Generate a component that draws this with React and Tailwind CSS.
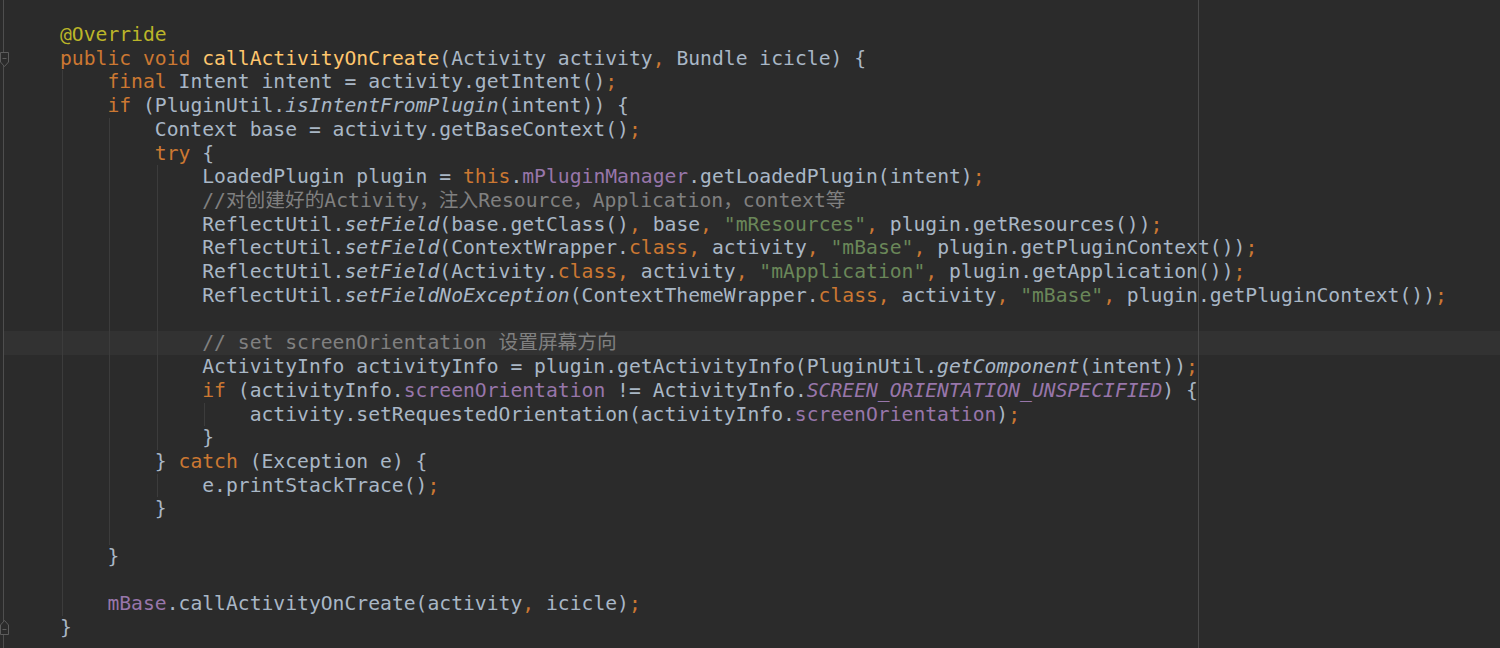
import React from 'react';

// token colours, Darcula-ish
const tone = {
    t: 'text-[#a9b7c6]',
    k: 'text-[#cc7832]',
    a: 'text-[#bbb529]',
    f: 'text-[#ffc66d]',
    s: 'text-[#6a8759]',
    p: 'text-[#9876aa]',
    i: 'text-[#a9b7c6] italic',
    pi: 'text-[#9876aa] italic',
    c: 'text-[#808080]',
};

const lines = [
    { ind: 4, t: [['a', '@Override']] },
    { ind: 4, t: [['k', 'public void '], ['f', 'callActivityOnCreate'], ['t', '(Activity activity'], ['k', ', '], ['t', 'Bundle icicle) {']] },
    { ind: 8, t: [['k', 'final '], ['t', 'Intent intent = activity.getIntent()'], ['k', ';']] },
    { ind: 8, t: [['k', 'if '], ['t', '(PluginUtil.'], ['i', 'isIntentFromPlugin'], ['t', '(intent)) {']] },
    { ind: 12, t: [['t', 'Context base = activity.getBaseContext()'], ['k', ';']] },
    { ind: 12, t: [['k', 'try '], ['t', '{']] },
    { ind: 16, t: [['t', 'LoadedPlugin plugin = '], ['k', 'this'], ['t', '.'], ['p', 'mPluginManager'], ['t', '.getLoadedPlugin(intent)'], ['k', ';']] },
    { ind: 16, t: [['c', '//对创建好的Activity，注入Resource，Application，context等']] },
    { ind: 16, t: [['t', 'ReflectUtil.'], ['i', 'setField'], ['t', '(base.getClass()'], ['k', ', '], ['t', 'base'], ['k', ', '], ['s', '"mResources"'], ['k', ', '], ['t', 'plugin.getResources())'], ['k', ';']] },
    { ind: 16, t: [['t', 'ReflectUtil.'], ['i', 'setField'], ['t', '(ContextWrapper.'], ['k', 'class, '], ['t', 'activity'], ['k', ', '], ['s', '"mBase"'], ['k', ', '], ['t', 'plugin.getPluginContext())'], ['k', ';']] },
    { ind: 16, t: [['t', 'ReflectUtil.'], ['i', 'setField'], ['t', '(Activity.'], ['k', 'class, '], ['t', 'activity'], ['k', ', '], ['s', '"mApplication"'], ['k', ', '], ['t', 'plugin.getApplication())'], ['k', ';']] },
    { ind: 16, t: [['t', 'ReflectUtil.'], ['i', 'setFieldNoException'], ['t', '(ContextThemeWrapper.'], ['k', 'class, '], ['t', 'activity'], ['k', ', '], ['s', '"mBase"'], ['k', ', '], ['t', 'plugin.getPluginContext())'], ['k', ';']] },
    { ind: 0, t: [] },
    { ind: 16, t: [['c', '// set screenOrientation 设置屏幕方向']], hl: true },
    { ind: 16, t: [['t', 'ActivityInfo activityInfo = plugin.getActivityInfo(PluginUtil.'], ['i', 'getComponent'], ['t', '(intent))'], ['k', ';']] },
    { ind: 16, t: [['k', 'if '], ['t', '(activityInfo.'], ['p', 'screenOrientation'], ['t', ' != ActivityInfo.'], ['pi', 'SCREEN_ORIENTATION_UNSPECIFIED'], ['t', ') {']] },
    { ind: 20, t: [['t', 'activity.setRequestedOrientation(activityInfo.'], ['p', 'screenOrientation'], ['t', ')'], ['k', ';']] },
    { ind: 16, t: [['t', '}']] },
    { ind: 12, t: [['t', '} '], ['k', 'catch '], ['t', '(Exception e) {']] },
    { ind: 16, t: [['t', 'e.printStackTrace()'], ['k', ';']] },
    { ind: 12, t: [['t', '}']] },
    { ind: 0, t: [] },
    { ind: 8, t: [['t', '}']] },
    { ind: 0, t: [] },
    { ind: 8, t: [['p', 'mBase'], ['t', '.callActivityOnCreate(activity'], ['k', ', '], ['t', 'icicle)'], ['k', ';']] },
    { ind: 4, t: [['t', '}']] },
];

// indent guides: which columns show a guide on a given (1-based) line
const guidesFor = (n) => {
    const g = [];
    if (n >= 3 && n <= 25) g.push(4);
    if (n >= 5 && n <= 22) g.push(8);
    if ((n >= 7 && n <= 18) || n === 20) g.push(12);
    if (n === 17) g.push(16);
    return g;
};

const FoldMark = ({ up, className }) => (
    <svg className={className} width="10" height="16" viewBox="0 0 10 16">
        {up ? (
            <path d="M0.5 15.5 H8.5 V6 L4.5 1.5 L0.5 6 Z" fill="#2b2b2b" stroke="#5c5c5c" />
        ) : (
            <path d="M0.5 0.5 H8.5 V10 L4.5 14.5 L0.5 10 Z" fill="#2b2b2b" stroke="#5c5c5c" />
        )}
        <path d={up ? 'M2.5 10.5 H6.5' : 'M2.5 6.5 H6.5'} stroke="#5c5c5c" />
    </svg>
);

const CodeLine = ({ line, n }) => {
    const guides = guidesFor(n);
    const segs = Math.max(line.ind / 4, guides.length ? Math.max(...guides) / 4 + 1 : 0);
    return (
        <div className={`flex h-[23.72px] leading-[23.72px] whitespace-pre pl-[8.6px] ${line.hl ? 'bg-[#323232]' : ''}`}>
            {Array.from({ length: segs }).map((_, k) => (
                <span
                    key={k}
                    className={`w-[4ch] shrink-0 ${guides.includes(k * 4) ? 'border-l border-[#3c3c3c] ml-[2px] -mr-[2px]' : ''}`}
                />
            ))}
            <span>
                {line.t.map(([type, text], j) => (
                    <span key={j} className={tone[type]}>{text}</span>
                ))}
            </span>
        </div>
    );
};

export default function App() {
    return (
        <div className="relative flex w-full h-[648px] overflow-hidden bg-[#2b2b2b] text-[19.7px] font-[family-name:'DejaVu_Sans_Mono','Noto_Sans_CJK_SC',monospace]">
            {/* gutter */}
            <div className="w-[4px] shrink-0 border-r border-[#4e4e4e]" />
            <FoldMark className="absolute left-0 top-[52px]" />
            <FoldMark up className="absolute left-0 top-[619px]" />

            {/* editor */}
            <div className="flex-1 pt-[23px]">
                {lines.map((line, idx) => (
                    <CodeLine key={idx} line={line} n={idx + 1} />
                ))}
            </div>

            {/* right margin */}
            <div className="absolute left-[1198px] top-0 bottom-0 w-px bg-[#4a4a4a]" />
        </div>
    );
}
